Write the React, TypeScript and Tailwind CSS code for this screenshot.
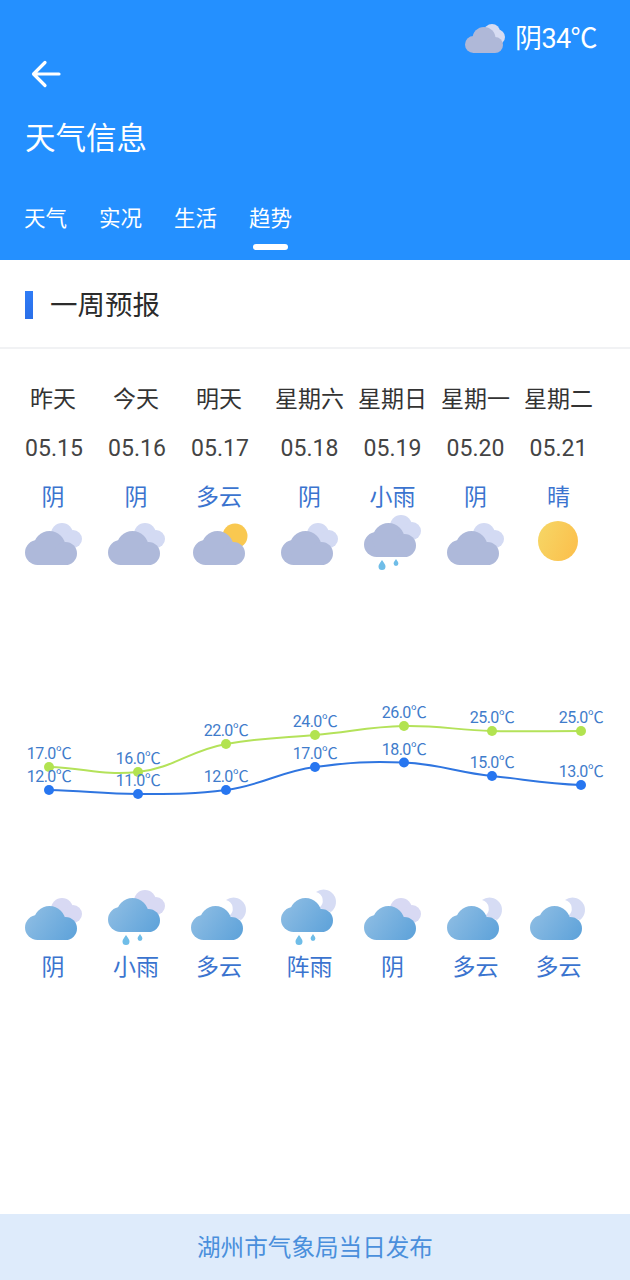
import { useId } from 'react'

type IconKind = 'overcast' | 'cloudy' | 'rain' | 'rainMoon' | 'sunny'
type Tone = 'day' | 'night'

const days = [
  { label: '昨天', date: '05.15', dayText: '阴', dayIcon: 'overcast', nightText: '阴', nightIcon: 'overcast' },
  { label: '今天', date: '05.16', dayText: '阴', dayIcon: 'overcast', nightText: '小雨', nightIcon: 'rain' },
  { label: '明天', date: '05.17', dayText: '多云', dayIcon: 'cloudy', nightText: '多云', nightIcon: 'cloudy' },
  { label: '星期六', date: '05.18', dayText: '阴', dayIcon: 'overcast', nightText: '阵雨', nightIcon: 'rainMoon' },
  { label: '星期日', date: '05.19', dayText: '小雨', dayIcon: 'rain', nightText: '阴', nightIcon: 'overcast' },
  { label: '星期一', date: '05.20', dayText: '阴', dayIcon: 'overcast', nightText: '多云', nightIcon: 'cloudy' },
  { label: '星期二', date: '05.21', dayText: '晴', dayIcon: 'sunny', nightText: '多云', nightIcon: 'cloudy' },
] as const

const xs = [49, 138, 226, 315, 404, 492, 581]
const high = [
  { y: 767, text: '17.0℃' },
  { y: 772, text: '16.0℃' },
  { y: 744, text: '22.0℃' },
  { y: 735, text: '24.0℃' },
  { y: 726, text: '26.0℃' },
  { y: 731, text: '25.0℃' },
  { y: 731, text: '25.0℃' },
]
const low = [
  { y: 790, text: '12.0℃' },
  { y: 794, text: '11.0℃' },
  { y: 790, text: '12.0℃' },
  { y: 767, text: '17.0℃' },
  { y: 762.5, text: '18.0℃' },
  { y: 776, text: '15.0℃' },
  { y: 785, text: '13.0℃' },
]

const CHART_TOP = 700

// smooth line through the points, catmull-rom style
function smoothPath(points: { y: number }[]) {
  const pts = points.map((p, i) => ({ x: xs[i], y: p.y - CHART_TOP }))
  let d = `M${pts[0].x} ${pts[0].y}`
  for (let i = 0; i < pts.length - 1; i++) {
    const p0 = pts[i - 1] ?? pts[i]
    const p1 = pts[i]
    const p2 = pts[i + 1]
    const p3 = pts[i + 2] ?? p2
    const c1y = p1.y + (p2.y - p0.y) / 6
    const c2y = p2.y - (p3.y - p1.y) / 6
    const midX = (p2.x - p1.x) * 0.4
    d += ` C${p1.x + midX} ${c1y} ${p2.x - midX} ${c2y} ${p2.x} ${p2.y}`
  }
  return d
}

function CloudShape({ fill }: { fill: string }) {
  return (
    <g fill={fill}>
      <circle cx="12.5" cy="21.5" r="12.5" />
      <circle cx="24.5" cy="16" r="16" />
      <circle cx="40.5" cy="22.5" r="11.5" />
      <rect x="12" y="20" width="29" height="14" />
    </g>
  )
}

function WeatherIcon({ kind, tone }: { kind: IconKind; tone: Tone }) {
  const id = useId()
  if (kind === 'sunny') {
    return (
      <svg width="58" height="56" viewBox="0 0 58 56">
        <defs>
          <linearGradient id={id} x1="0" y1="0" x2="1" y2="0.4">
            <stop offset="0" stopColor="#f6d766" />
            <stop offset="1" stopColor="#fbc24f" />
          </linearGradient>
        </defs>
        <circle cx="28" cy="26" r="20" fill={`url(#${id})`} />
      </svg>
    )
  }
  const rainy = kind === 'rain' || kind === 'rainMoon'
  const top = rainy ? 8 : 16
  const moon = tone === 'night' && (kind === 'cloudy' || kind === 'rainMoon')
  return (
    <svg
      width="58"
      height="56"
      viewBox="0 0 58 56"
      className={`overflow-visible ${kind === 'cloudy' && tone === 'day' ? 'translate-x-[2px]' : ''}`}
    >
      <defs>
        <linearGradient id={id} gradientUnits="userSpaceOnUse" x1="6" y1="4" x2="48" y2="34">
          <stop offset="0" stopColor="#8cbce3" />
          <stop offset="1" stopColor="#5fa3da" />
        </linearGradient>
      </defs>
      <g transform={`translate(0 ${top})`}>
        {kind === 'cloudy' && tone === 'day' && <circle cx="42" cy="5" r="12.5" fill="#f9c850" />}
        {moon && <path d="M35 -6 A12.5 12.5 0 0 1 50 14 L38 10 A9 9 0 0 0 35 -6 Z" fill="#d6dcf4" />}
        {!moon && kind !== 'cloudy' && (
          <g fill={tone === 'night' ? '#d8d9f3' : '#d3daf3'}>
            <circle cx="37" cy="3" r="11" />
            <circle cx="48" cy="8" r="9" />
            <rect x="30" y="4" width="20" height="13" />
          </g>
        )}
        <CloudShape fill={tone === 'night' ? `url(#${id})` : '#aeb9da'} />
        {rainy && (
          <g fill="#6fbde8">
            <path d="M18 37 C20 40 21.5 41.5 21.5 43.5 A3.5 3.5 0 0 1 14.5 43.5 C14.5 41.5 16 40 18 37 Z" />
            <path d="M32 36 C33.4 38.2 34.4 39.2 34.4 40.6 A2.4 2.4 0 0 1 29.6 40.6 C29.6 39.2 30.6 38.2 32 36 Z" />
          </g>
        )}
      </g>
    </svg>
  )
}

function HeaderCloud() {
  return (
    <svg width="40" height="30" viewBox="0 0 40 30">
      <g fill="#d7dcf2">
        <circle cx="27" cy="8" r="8" />
        <circle cx="32.5" cy="13" r="7.5" />
      </g>
      <g fill="#afb8d8">
        <circle cx="8.5" cy="20.5" r="8.5" />
        <circle cx="19" cy="14.5" r="11.5" />
        <circle cx="30" cy="21" r="8" />
        <rect x="8" y="18" width="22" height="11" />
      </g>
    </svg>
  )
}

function Chart() {
  return (
    <svg width="630" height="110" viewBox="0 0 630 110" className="block">
      <path d={smoothPath(high)} fill="none" stroke="#b4e25a" strokeWidth="2" />
      <path d={smoothPath(low)} fill="none" stroke="#2f75e0" strokeWidth="2" />
      {high.map((p, i) => (
        <circle key={i} cx={xs[i]} cy={p.y - CHART_TOP} r="5" fill="#b2e350" />
      ))}
      {low.map((p, i) => (
        <circle key={i} cx={xs[i]} cy={p.y - CHART_TOP} r="5" fill="#2776f0" />
      ))}
      {[...high, ...low].map((p, i) => (
        <text
          key={i}
          x={i >= 7 ? xs[i - 7] : xs[i]}
          y={p.y - CHART_TOP - 8}
          textAnchor="middle"
          fontSize="16"
          fill="#3f7ccb"
          letterSpacing="-0.5"
        >
          {p.text}
        </text>
      ))}
    </svg>
  )
}

export default function App() {
  return (
    <div className="w-[630px] h-[1280px] flex flex-col bg-white font-['Roboto','Noto_Sans_CJK_SC',sans-serif]">
      <header className="h-[260px] bg-[#2490ff] text-white flex flex-col px-6">
        <div className="self-end flex items-center gap-[10px] mt-[24px] mr-[9px] h-[30px]">
          <HeaderCloud />
          <span className="text-[27px] leading-[30px] tracking-[-0.6px]">阴34℃</span>
        </div>
        <svg
          width="30"
          height="28"
          viewBox="0 0 30 28"
          className="ml-[7px] mt-[6px]"
          fill="none"
          stroke="white"
          strokeWidth="3.2"
          strokeLinecap="round"
          strokeLinejoin="round"
        >
          <path d="M28 14 H3 M14 2.5 L2.5 14 L14 25.5" />
        </svg>
        <h1 className="text-[30.5px] leading-[40px] mt-[31px] ml-[1px]">天气信息</h1>
        <nav className="flex gap-[32px] mt-[45px] text-[21.5px] leading-[30px]">
          <span>天气</span>
          <span>实况</span>
          <span>生活</span>
          <span className="relative">
            趋势
            <span className="absolute left-[4px] top-[40px] w-[35px] h-[6px] rounded-full bg-white" />
          </span>
        </nav>
      </header>

      <section className="h-[89px] flex items-center pl-[25px] pt-[2px] border-b-2 border-[#f1f2f4]">
        <span className="w-[8px] h-[28px] bg-gradient-to-b from-[#2f7cf6] to-[#2a6fe8]" />
        <h2 className="ml-[17px] mt-[3px] text-[27.5px] text-[#2b2b2b]">一周预报</h2>
      </section>

      <div className="flex pl-[25px] pt-[33px]">
        {days.map((d, i) => (
          <div key={d.date} className={`shrink-0 ${i === 2 ? 'w-[84px]' : 'w-[83px]'}`}>
            <div className="w-fit flex flex-col items-center">
              <div className={`text-[23px] leading-[36px] text-[#333] ${i < 3 ? '-ml-[2px]' : ''}`}>{d.label}</div>
              <div className="text-[23px] leading-[36px] mt-[13px] text-[#444]">{d.date}</div>
              <div className={`text-[23px] leading-[36px] mt-[13px] text-[#3b74cf] ${i < 3 ? '-ml-[2px]' : ''}`}>
                {d.dayText}
              </div>
              <div className="-mt-[1px]">
                <WeatherIcon kind={d.dayIcon} tone="day" />
              </div>
            </div>
          </div>
        ))}
      </div>

      <div className="mt-[129px]">
        <Chart />
      </div>

      <div className="flex pl-[25px] mt-[80px]">
        {days.map((d, i) => (
          <div key={d.date} className={`shrink-0 ${i === 2 ? 'w-[84px]' : 'w-[83px]'}`}>
            <div className={`flex flex-col items-center ${d.label.length > 2 ? 'w-[69px]' : 'w-[58px]'}`}>
              <WeatherIcon kind={d.nightIcon} tone="night" />
              <div className={`text-[23px] leading-[36px] mt-[4px] text-[#3b74cf] ${i < 3 ? '-ml-[2px]' : ''}`}>
                {d.nightText}
              </div>
            </div>
          </div>
        ))}
      </div>

      <footer className="mt-auto h-[66px] pt-[3px] bg-[#deebfb] flex items-center justify-center text-[23.6px] text-[#4a8fdc]">
        湖州市气象局当日发布
      </footer>
    </div>
  )
}
